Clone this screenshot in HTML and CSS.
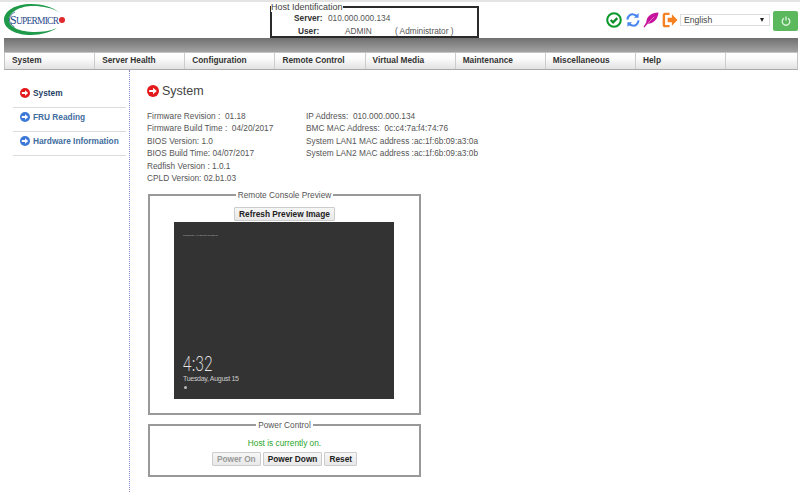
FILE: index.html
```html
<!DOCTYPE html>
<html lang="en">
<head>
<meta charset="utf-8">
<title>Supermicro BMC</title>
<link rel="stylesheet" href="styles.css">
</head>
<body>
<header class="top">
  <div class="logo">
    <svg width="64" height="34" viewBox="0 0 64 34">
      <path d="M57 10C50 4 39 1 28 1 12 1 1 8 1 17c0 9 12 15 27 15 10 0 20-3 26-7-7 3-15 4-22 4C17 29 6 24 6 17 6 9 17 3 30 3c10 0 20 2 27 7z" fill="#1f9a4a"/>
      <path d="M12 9C8 11 6.500 14 6.500 17c0 3 2 5 5 7" fill="none" stroke="#2a4a8c" stroke-width=".8"/>
      <circle cx="59" cy="17" r="3" fill="#e0282e"/>
      <text x="7" y="21" class="logo-text" textLength="49" lengthAdjust="spacing"><tspan class="logo-cap">S</tspan>UPERMICR</text>
    </svg>
  </div>
  <fieldset class="host">
    <legend>Host Identification</legend>
    <div class="host-row"><b class="host-server">Server:</b><span>010.000.000.134</span></div>
    <div class="host-row"><b class="host-user">User:</b><span class="host-admin">ADMIN</span><span class="host-role">( Administrator )</span></div>
  </fieldset>
  <div class="tools">
    <svg class="ico ico-check" width="16" height="16" viewBox="0 0 17 17"><circle cx="8.500" cy="8.500" r="7.200" fill="none" stroke="#0a9a2c" stroke-width="2.200"/><path d="M5 8.500l2.500 2.500L12 6.500" fill="none" stroke="#0a8a28" stroke-width="2.400"/></svg>
    <svg class="ico" width="14" height="16" viewBox="0 0 15 17"><path d="M1.500 8C2 4 5 2 8 2.500c2 .2 3 1 4 2M13.500 9c-.5 4-3.500 6-6.500 5.500-2-.2-3-1-4-2" fill="none" stroke="#4a86f0" stroke-width="2.200"/><path d="M13.500 1v5h-5zM1.500 16v-5h5z" fill="#4a86f0"/></svg>
    <svg class="ico" width="16" height="16" viewBox="0 0 17 17"><path d="M16.500 .5C9 1 4 4 3.500 11L.5 16l1 .5L5 12.500C11 12.500 15.500 8 16.500 .5z" fill="#c6129c"/><path d="M5 12l7-7" stroke="#f3b8e4" stroke-width=".7"/></svg>
    <svg class="ico" width="16" height="16" viewBox="0 0 17 17"><path d="M8 2H3.500C2.500 2 2 2.500 2 3.500v10c0 1 .5 1.500 1.500 1.500H8" fill="none" stroke="#f58220" stroke-width="2.600"/><path d="M6 6h4.500V2.500l6 6-6 6V11H6z" fill="#f58220"/></svg>
    <div class="lang"><span>English</span><i class="caret"></i></div>
    <div class="power">
      <svg width="10" height="10" viewBox="0 0 10 10"><path d="M3 2.200a3.800 3.800 0 1 0 4 0M5 .5v4" fill="none" stroke="#dff3df" stroke-width="1.300"/></svg>
    </div>
  </div>
</header>
<div class="band"></div>
<nav class="menu">
  <a>System</a><a>Server Health</a><a>Configuration</a><a>Remote Control</a><a>Virtual Media</a><a>Maintenance</a><a>Miscellaneous</a><a>Help</a><a></a>
</nav>
<div class="page">
  <aside class="side">
    <div class="side-item active"><svg class="arrow" width="10" height="10" viewBox="0 0 11 11"><circle cx="5.500" cy="5.500" r="5.500"/><path d="M2 4.500h3.500V2.500L9 5.500 5.500 8.500v-2H2z" fill="#fff"/></svg>System</div>
    <div class="side-item"><svg class="arrow" width="10" height="10" viewBox="0 0 11 11"><circle cx="5.500" cy="5.500" r="5.500"/><path d="M2 4.500h3.500V2.500L9 5.500 5.500 8.500v-2H2z" fill="#fff"/></svg>FRU Reading</div>
    <div class="side-item"><svg class="arrow" width="10" height="10" viewBox="0 0 11 11"><circle cx="5.500" cy="5.500" r="5.500"/><path d="M2 4.500h3.500V2.500L9 5.500 5.500 8.500v-2H2z" fill="#fff"/></svg>Hardware Information</div>
  </aside>
  <main class="content">
    <h1 class="title"><svg class="arrow red" width="12" height="12" viewBox="0 0 11 11"><circle cx="5.500" cy="5.500" r="5.500"/><path d="M2 4.500h3.500V2.500L9 5.500 5.500 8.500v-2H2z" fill="#fff"/></svg>System</h1>
    <div class="info">
      <div class="info-col">
        <p>Firmware Revision :&nbsp; 01.18</p>
        <p>Firmware Build Time :&nbsp; 04/20/2017</p>
        <p>BIOS Version: 1.0</p>
        <p>BIOS Build Time: 04/07/2017</p>
        <p>Redfish Version : 1.0.1</p>
        <p>CPLD Version: 02.b1.03</p>
      </div>
      <div class="info-col">
        <p>IP Address:&nbsp; 010.000.000.134</p>
        <p>BMC MAC Address:&nbsp; 0c:c4:7a:f4:74:76</p>
        <p>System LAN1 MAC address :ac:1f:6b:09:a3:0a</p>
        <p>System LAN2 MAC address :ac:1f:6b:09:a3:0b</p>
      </div>
    </div>
    <fieldset class="box preview">
      <legend>Remote Console Preview</legend>
      <button class="btn">Refresh Preview Image</button>
      <div class="screen">
        <div class="screen-top">Press Ctrl+Alt+Delete to sign in.</div>
        <div class="clock">4:32</div>
        <div class="date">Tuesday, August 15</div>
        <div class="dot"></div>
      </div>
    </fieldset>
    <fieldset class="box powerbox">
      <legend>Power Control</legend>
      <div class="status">Host is currently on.</div>
      <div class="btns"><button class="btn off">Power On</button><button class="btn">Power Down</button><button class="btn">Reset</button></div>
    </fieldset>
  </main>
</div>
</body>
</html>
```

FILE: styles.css
```css
* { box-sizing: border-box; }
html, body { margin: 0; padding: 0; }
body {
  width: 800px;
  height: 492px;
  overflow: hidden;
  background: #fff;
  font-family: "Liberation Sans", Arial, sans-serif;
  font-size: 8.300px;
  color: #555;
}
.top {
  display: flex;
  height: 38px;
  border-top: 2px solid #e4e4e4;
  padding-left: 3px;
}
.logo { width: 267px; padding-top: 1px; }
.logo svg { display: block; }
.logo-text { font-family: "Liberation Serif", serif; font-size: 9.500px; fill: #2a4a8c; }
.logo-cap { font-size: 12px; }
.host {
  width: 209px;
  height: 36px;
  margin: 0;
  padding: 0;
  border: 2px solid #2a2a2a;
  font-size: 8.300px;
}
.host legend {
  padding: 0;
  margin-left: -1px;
  font-size: 9px;
  line-height: 10px;
  color: #444;
}
.host-row { display: flex; height: 13px; line-height: 12px; }
.host-row b { color: #333; }
.host-server { margin-left: 22px; width: 34px; }
.host-user { margin-left: 26px; width: 47px; }
.host-admin { width: 50px; }
.tools {
  display: flex;
  align-items: center;
  height: 22px;
  margin-top: 7px;
  margin-left: 127px;
  gap: 3px;
}
.ico { display: block; flex: none; }
.ico-check { margin-right: 1px; }
.lang {
  width: 90px;
  height: 12px;
  margin-left: -1px;
  padding-left: 3px;
  border: 1px solid #ddd;
  display: flex;
  align-items: center;
  justify-content: space-between;
  font-size: 8.600px;
  color: #444;
}
.caret {
  width: 0; height: 0;
  margin-right: 5px;
  border-left: 2.500px solid transparent;
  border-right: 2.500px solid transparent;
  border-top: 4px solid #222;
}
.power {
  width: 25px;
  height: 20px;
  align-self: flex-end;
  background: #5cb85c;
  border-radius: 2px;
  display: flex;
  align-items: center;
  justify-content: center;
}
.band {
  height: 14px;
  margin-left: 4px;
  width: 794px;
  background: linear-gradient(#707070, #a2a2a2);
}
.menu {
  display: flex;
  width: 794px;
  height: 18px;
  margin-left: 4px;
  border: 1px solid #c4c4c4;
  border-bottom-color: #aaa;
  background: linear-gradient(#fff, #fbfbfb 35%, #e2e2e2);
}
.menu a {
  width: 90.150px;
  padding-left: 7px;
  border-right: 1px solid #ccc;
  font-size: 8.300px;
  font-weight: 700;
  color: #333;
  line-height: 15px;
}
.menu a:last-child { flex: 1; border-right: 0; }
.page { display: flex; height: 422px; }
.side {
  width: 130px;
  padding: 14px 0 0 13px;
  border-right: 1px dotted #8a8ad0;
}
.side-item {
  display: flex;
  align-items: center;
  gap: 3px;
  width: 113px;
  height: 24px;
  padding-left: 7px;
  padding-bottom: 5px;
  border-bottom: 1px solid #ddd;
  font-size: 8.300px;
  font-weight: 700;
  color: #3f6d9e;
  white-space: nowrap;
}
.side-item .arrow { fill: #3b78d8; flex: none; }
.side-item.active { color: #1f3f66; }
.side-item.active .arrow { fill: #e3191c; }
.content { flex: 1; padding: 13px 0 0 17px; }
.title {
  display: flex;
  align-items: center;
  gap: 3px;
  height: 16px;
  margin: 0 0 11px;
  font-size: 12.500px;
  font-weight: 400;
  color: #444;
}
.arrow.red { fill: #e3191c; }
.info { display: flex; height: 80px; }
.info-col { width: 159px; }
.info-col p { margin: 0; height: 12.400px; line-height: 12.400px; white-space: nowrap; }
.box {
  width: 273px;
  margin: 0 0 0 1px;
  padding: 0;
  border: 2px solid #999;
  text-align: center;
}
.box legend {
  padding: 0 2px;
  margin: 0 auto;
  line-height: 10px;
  font-size: 8.300px;
  color: #555;
}
.preview { height: 225px; margin-bottom: 5px; }
.btn {
  height: 14px;
  margin: 0;
  padding: 0 4px;
  border: 1px solid #ccc;
  border-radius: 1px;
  background: linear-gradient(#f6f6f6, #e8e8e8);
  font-family: "Liberation Sans", Arial, sans-serif;
  font-size: 8.300px;
  font-weight: 700;
  color: #222;
}
.btn.off { color: #999; }
.preview .btn { display: block; margin: 7px auto 0; }
.screen {
  width: 220px;
  height: 177px;
  margin: 1px 0 0 24px;
  padding: 12px 0 0 9px;
  background: #333;
  color: #eee;
  text-align: left;
}
.screen-top { font-size: 2.500px; line-height: 4px; height: 116px; color: #bbb; }
.clock { font-size: 22px; line-height: 25px; font-family: Lato, sans-serif; font-weight: 300; color: #e4e4e4; transform: scaleX(.68); transform-origin: left; }
.date { font-size: 7px; line-height: 8px; letter-spacing: -.3px; color: #ccc; }
.dot { width: 3px; height: 3px; margin: 3px 0 0 1px; border-radius: 50%; background: #bbb; }
.powerbox { height: 57px; }
.status { color: #2aa52a; margin-top: 6px; line-height: 14px; }
.btns { display: flex; justify-content: center; gap: 2px; margin-top: 2px; }
```
